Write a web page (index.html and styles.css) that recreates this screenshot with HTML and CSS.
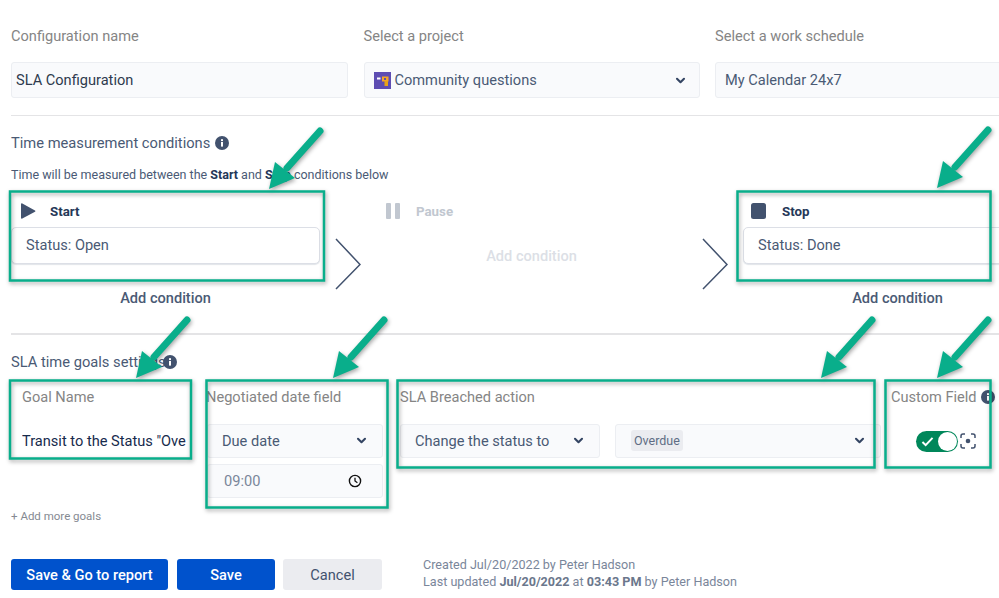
FILE: index.html
```html
<!DOCTYPE html>
<html lang="en">
<head>
<meta charset="utf-8">
<title>SLA Configuration</title>
<link rel="stylesheet" href="styles.css">
</head>
<body>
<svg width="0" height="0" class="defs">
  <defs>
    <symbol id="chev" viewBox="0 0 12 8"><path d="M2 2l4 4 4-4" fill="none" stroke="#344563" stroke-width="2.4" stroke-linecap="round" stroke-linejoin="round"/></symbol>
    <symbol id="info" viewBox="0 0 14 14"><circle cx="7" cy="7" r="7" fill="#42526e"/><rect x="6" y="6" width="2" height="4.6" fill="#fff"/><rect x="6" y="3.2" width="2" height="1.9" fill="#fff"/></symbol>
  </defs>
</svg>
<main class="page">
  <section class="top-fields">
    <div class="field">
      <div class="label">Configuration name</div>
      <div class="box dark">SLA Configuration</div>
    </div>
    <div class="field">
      <div class="label">Select a project</div>
      <div class="box project">
        <svg class="project-icon" viewBox="0 0 17 17"><rect width="17" height="17" fill="#5e4db2"/><rect x="8" y="4.5" width="6.5" height="5" fill="#f5a623"/><rect x="10.5" y="9" width="3.5" height="5" fill="#e8a317"/><rect x="3" y="5.5" width="3.5" height="2" fill="#fff"/><rect x="10" y="6" width="2" height="2" fill="#5e4db2"/></svg>
        <span class="grow">Community questions</span>
        <svg class="chev"><use href="#chev"/></svg>
      </div>
    </div>
    <div class="field">
      <div class="label">Select a work schedule</div>
      <div class="box schedule">My Calendar 24x7</div>
    </div>
  </section>
  <hr class="rule first">
  <h2 class="title">Time measurement conditions <svg class="info"><use href="#info"/></svg></h2>
  <p class="hint">Time will be measured between the <b>Start</b> and <b>Stop</b> conditions below</p>
  <section class="conditions">
    <div class="cond">
      <div class="cond-head">
        <svg class="cond-icon" viewBox="0 0 16 16"><path d="M1 1.2v13.6c0 .8.7 1.1 1.3.7L15 8.7c.5-.3.5-1 0-1.3L2.3.5C1.7.1 1 .4 1 1.2z" fill="#42526e"/></svg>
        <span>Start</span>
      </div>
      <div class="cond-card">Status: Open</div>
      <div class="add">Add condition</div>
    </div>
    <svg class="sep" viewBox="0 0 26 52"><path d="M1 1l24 25.500L1 51" fill="none" stroke="#42526e" stroke-width="1.500"/></svg>
    <div class="cond-pause">
      <div class="cond-head pause-head">
        <svg class="cond-icon" viewBox="0 0 16 16"><rect x="1" y="0" width="5" height="16" rx="1" fill="#c1c7d0"/><rect x="10" y="0" width="5" height="16" rx="1" fill="#c1c7d0"/></svg>
        <span>Pause</span>
      </div>
      <div class="add-muted">Add condition</div>
    </div>
    <svg class="sep" viewBox="0 0 26 52"><path d="M1 1l24 25.500L1 51" fill="none" stroke="#42526e" stroke-width="1.500"/></svg>
    <div class="cond stop">
      <div class="cond-head">
        <svg class="cond-icon" viewBox="0 0 16 16"><rect width="15" height="16" rx="2.500" fill="#42526e"/></svg>
        <span>Stop</span>
      </div>
      <div class="cond-card">Status: Done</div>
      <div class="add">Add condition</div>
    </div>
  </section>
  <hr class="rule second">
  <h2 class="title goals-title">SLA time goals settings <svg class="info"><use href="#info"/></svg></h2>
  <section class="goals">
    <div class="col-goal">
      <div class="label">Goal Name</div>
      <div class="goal-value">Transit to the Status "Overdue"</div>
    </div>
    <div class="col-date">
      <div class="label">Negotiated date field</div>
      <div class="box small select">
        <span class="grow">Due date</span>
        <svg class="chev"><use href="#chev"/></svg>
      </div>
      <div class="box small time">
        <span class="grow">09:00</span>
        <svg class="clock" viewBox="0 0 14 14"><circle cx="7" cy="7" r="5.600" fill="none" stroke="#111" stroke-width="1.400"/><path d="M7 3.800V7l2.400 1.800" fill="none" stroke="#111" stroke-width="1.300"/></svg>
      </div>
    </div>
    <div class="col-action">
      <div class="label">SLA Breached action</div>
      <div class="action-row">
        <div class="box small select action-select">
          <span class="grow">Change the status to</span>
          <svg class="chev"><use href="#chev"/></svg>
        </div>
        <div class="box small status-select">
          <span class="grow"><span class="tag">Overdue</span></span>
          <svg class="chev"><use href="#chev"/></svg>
        </div>
      </div>
    </div>
    <div class="col-custom">
      <div class="label">Custom Field <svg class="info"><use href="#info"/></svg></div>
      <div class="toggle-row">
        <div class="toggle">
          <svg class="check" viewBox="0 0 14 12"><path d="M1.500 6.500l3.500 3.500 7.500-8" fill="none" stroke="#fff" stroke-width="2.200"/></svg>
          <span class="knob"></span>
        </div>
        <svg class="focus" viewBox="0 0 16 16"><path d="M1 5V3a2 2 0 0 1 2-2h2M11 1h2a2 2 0 0 1 2 2v2M15 11v2a2 2 0 0 1-2 2h-2M5 15H3a2 2 0 0 1-2-2v-2" fill="none" stroke="#42526e" stroke-width="1.500"/><circle cx="8" cy="8" r="2.300" fill="#42526e"/></svg>
      </div>
    </div>
  </section>
  <div class="more">+ Add more goals</div>
  <footer class="actions">
    <button class="btn primary wide">Save &amp; Go to report</button>
    <button class="btn primary save">Save</button>
    <button class="btn cancel">Cancel</button>
    <div class="meta">
      <div>Created Jul/20/2022 by Peter Hadson</div>
      <div>Last updated <b>Jul/20/2022</b> at <b>03:43 PM</b> by Peter Hadson</div>
    </div>
  </footer>
</main>
<svg class="marks" viewBox="0 0 999 598" aria-hidden="true">
  <defs>
    <g id="arrow">
      <path d="M0 0L-33 37" fill="none" stroke="#09ae8b" stroke-width="7" stroke-linecap="round"/>
      <path d="M-51 58L-45 31L-25 47Z" fill="#09ae8b"/>
    </g>
  </defs>
  <g fill="none" stroke="#09ae8b" stroke-width="2.500">
    <rect x="10" y="191.500" width="314" height="89"/>
    <rect x="737.500" y="191.500" width="253" height="89"/>
    <rect x="10" y="380.500" width="181" height="78"/>
    <rect x="206.500" y="380.500" width="181" height="127"/>
    <rect x="397.500" y="380.500" width="477" height="87"/>
    <rect x="885.500" y="380.500" width="105" height="87"/>
  </g>
  <use href="#arrow" x="320" y="131"/>
  <use href="#arrow" x="988" y="130"/>
  <use href="#arrow" x="187" y="320"/>
  <use href="#arrow" x="384" y="320"/>
  <use href="#arrow" x="872" y="320"/>
  <use href="#arrow" x="988" y="320"/>
</svg>
</body>
</html>
```
FILE: styles.css
```css
html, body {
  margin: 0;
  width: 999px;
  height: 598px;
  overflow: hidden;
  background: #fff;
}
body {
  position: relative;
  font-family: Roboto, "Liberation Sans", sans-serif;
  font-size: 14.600px;
  color: #4a5a75;
}
.defs { position: absolute; }
.page {
  width: 999px;
  height: 598px;
  box-sizing: border-box;
  padding: 27px 0 0 11px;
  overflow: hidden;
}
.top-fields {
  display: grid;
  grid-template-columns: 337px 336px 300px;
  column-gap: 15.500px;
}
.label {
  height: 18px;
  line-height: 18px;
  font-size: 14.600px;
  color: #858585;
  white-space: nowrap;
}
.box {
  display: flex;
  align-items: center;
  box-sizing: border-box;
  height: 36px;
  margin-top: 17px;
  background: #f9fafc;
  border: 1px solid #eceef2;
  border-radius: 3px;
  padding: 0 4px;
}
.dark { color: #2e3a4e; }
.project { padding: 0 13px 0 9px; }
.project-icon { width: 17px; height: 17px; margin-right: 4px; flex: none; }
.schedule { padding-left: 9px; width: 300px; }
.grow { flex: 1; white-space: nowrap; }
.chev { width: 11px; height: 7px; flex: none; }
.rule { border: 0; height: 1.500px; background: #e4e4e6; margin: 0; }
.rule.first { margin-top: 16.500px; }
.rule.second { margin-top: 26.500px; }
.title {
  display: flex;
  align-items: center;
  gap: 5px;
  margin: 18px 0 0;
  height: 18px;
  line-height: 18px;
  font-size: 14.700px;
  font-weight: 400;
  color: #4a5a75;
}
.info { width: 14px; height: 14px; flex: none; }
.hint {
  margin: 15px 0 0;
  line-height: 16px;
  height: 16px;
  font-size: 12.500px;
  color: #4a5a75;
}
.hint b { color: #253858; font-weight: 700; }
.conditions { display: flex; margin-top: 20px; }
.cond { width: 309px; flex: none; }
.stop { margin-left: 15px; }
.cond-head {
  display: flex;
  align-items: center;
  height: 16px;
  font-size: 13.300px;
  font-weight: 700;
  color: #253858;
}
.cond-head span { margin-left: 14px; }
.cond-icon { width: 16px; height: 16px; margin-left: 9px; flex: none; }
.stop .cond-icon { margin-left: 8px; }
.stop .cond-head span { margin-left: 15px; }
.cond-card {
  box-sizing: border-box;
  height: 36.500px;
  margin-top: 8px;
  padding-left: 14px;
  display: flex;
  align-items: center;
  border: 1px solid #dcdfe6;
  border-radius: 5px;
  box-shadow: 0 1px 1px rgba(9, 30, 66, .12);
  background: #fff;
}
.add {
  margin-top: 25px;
  height: 18px;
  line-height: 18px;
  text-align: center;
  font-size: 14.600px;
  font-weight: 500;
}
.sep { width: 26px; height: 52px; margin: 35px 0 0 15px; flex: none; }
.cond-pause + .sep { margin-left: 0; }
.cond-pause { width: 341px; flex: none; }
.cond-head.pause-head { color: #c1c7d0; }
.pause-head .cond-icon { margin-left: 24px; }
.pause-head span { margin-left: 15px; }
.add-muted {
  margin-top: 28px;
  height: 18px;
  line-height: 18px;
  text-align: center;
  font-size: 14.600px;
  font-weight: 500;
  color: #dcdfe6;
}
.goals-title { margin-top: 18px; gap: 0; }
.goals-title .info { margin-left: -3px; }
.goals { display: flex; margin-top: 17px; }
.col-goal { width: 164px; margin-left: 11px; flex: none; }
.goal-value {
  margin-top: 18px;
  height: 35px;
  line-height: 35px;
  color: #172b4d;
  white-space: nowrap;
  overflow: hidden;
}
.col-date { width: 177px; margin-left: 20px; flex: none; }
.small { height: 34.500px; margin-top: 18px; }
.select { padding: 0 15px 0 14px; }
.col-date .select { margin-left: 1px; }
.time {
  margin: 5.500px 0 0 1px;
  padding: 0 20px 0 16px;
  color: #7a869a;
}
.clock { width: 14px; height: 14px; flex: none; }
.col-action { width: 481px; margin-left: 17px; flex: none; }
.action-row { display: flex; gap: 15px; }
.action-select { width: 200px; flex: none; }
.status-select { width: 266px; flex: none; padding: 0 15px 0 15px; }
.tag {
  display: inline-block;
  height: 21px;
  line-height: 21px;
  padding: 0 3px;
  border-radius: 3px;
  background: #ebecf0;
  font-size: 12.500px;
  color: #5e6c84;
}
.col-custom { width: 108px; margin-left: 10px; flex: none; }
.col-custom .label { display: flex; align-items: center; gap: 4.500px; }
.toggle-row { display: flex; align-items: center; margin: 25px 0 0 25px; gap: 2px; }
.toggle {
  position: relative;
  box-sizing: border-box;
  width: 42px;
  height: 21px;
  border-radius: 11px;
  background: #00875a;
  flex: none;
}
.check { position: absolute; left: 5px; top: 5px; width: 13px; height: 11px; }
.knob {
  position: absolute;
  right: 1px;
  top: 1px;
  width: 19px;
  height: 19px;
  border-radius: 50%;
  background: #fff;
}
.focus { width: 16px; height: 16px; flex: none; }
.more {
  margin-top: 10px;
  height: 16px;
  line-height: 16px;
  font-size: 11.500px;
  color: #858a92;
}
.actions { display: flex; align-items: flex-start; margin-top: 35px; }
.btn {
  height: 31px;
  padding: 0;
  border: 0;
  border-radius: 3px;
  font-family: inherit;
  font-size: 14.600px;
}
.primary { background: #0052cc; color: #fff; font-weight: 500; }
.wide { width: 157px; }
.save { width: 98px; margin-left: 9px; }
.cancel { width: 99px; margin-left: 8px; background: #ebecf0; color: #42526e; }
.meta {
  margin: -3px 0 0 41px;
  font-size: 12.600px;
  line-height: 17px;
  color: #7a869a;
}
.meta b { font-weight: 700; color: #6b778c; }
.marks {
  position: absolute;
  left: 0;
  top: 0;
  width: 999px;
  height: 598px;
  pointer-events: none;
  filter: drop-shadow(1px 2px 2px rgba(0, 0, 0, .35));
}
```
